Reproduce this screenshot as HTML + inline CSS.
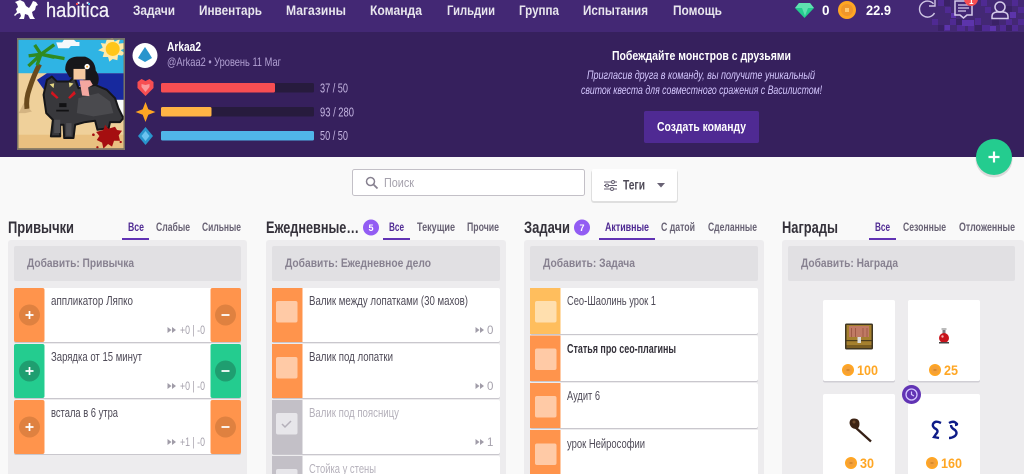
<!DOCTYPE html>
<html><head><meta charset="utf-8"><title>Habitica</title>
<style>
html,body{margin:0;padding:0;width:1024px;height:474px;overflow:hidden;background:#f9f9f9}
svg{display:block;position:absolute;left:0;top:0}
text{font-family:"Liberation Sans","Noto Sans CJK SC",sans-serif;white-space:pre}
.n{font-size:13.5px;font-weight:700;fill:#e8e6ee}
.t{font-size:12px;font-weight:700;fill:#686274}
.a{font-size:12px;font-weight:700;fill:#878190}
.h{font-size:16.5px;font-weight:700;fill:#34313a}
.x{font-size:13px;fill:#4e4a57}
.g{font-size:13px;fill:#b4b0ba}
.m{font-size:11.5px;fill:#a5a1ac}
.p{font-size:14px;font-weight:700;fill:#ffa623}
.v{font-size:12.5px;fill:#c3b4e0}
.b{fill:#e8e6ee;font-weight:700;font-size:12.5px}
</style></head><body>
<svg width="1024" height="474" viewBox="0 0 1024 474" xmlns="http://www.w3.org/2000/svg">
<defs>
<symbol id="coin" viewBox="0 0 12 12"><circle cx="6" cy="6" r="6" fill="#ffa623"/><circle cx="6" cy="6" r="4" fill="#f3a03a"/><rect x="4.500" y="5" width="3" height="2" fill="#d98a2a"/></symbol>
</defs>
<rect width="1024" height="474" fill="#f9f9f9"/>
<!-- top nav -->
<rect width="1024" height="32" fill="#432874"/>
<g fill="#3a2266">
<rect x="944" y="0" width="6" height="6"/><rect x="956" y="19" width="6" height="6"/><rect x="938" y="25" width="6" height="6"/><rect x="975" y="25" width="7" height="6"/><rect x="992" y="19" width="7" height="6"/><rect x="1006" y="6" width="6" height="6"/><rect x="1006" y="25" width="6" height="6"/>
</g>
<g fill="#4f2a93">
<rect x="938" y="0" width="6" height="6"/><rect x="945" y="7" width="6" height="6"/><rect x="932" y="19" width="6" height="6"/><rect x="944" y="25" width="6" height="6"/><rect x="950" y="19" width="6" height="6"/><rect x="957" y="25" width="8" height="6"/><rect x="975" y="18" width="6" height="7"/><rect x="968" y="25" width="6" height="6"/><rect x="982" y="25" width="8" height="6"/><rect x="985" y="7" width="6" height="6"/><rect x="981" y="0" width="6" height="6"/><rect x="1012" y="0" width="6" height="6"/><rect x="1018" y="7" width="6" height="6"/><rect x="1006" y="19" width="6" height="6"/><rect x="1000" y="25" width="6" height="6"/><rect x="1012" y="25" width="6" height="6"/><rect x="1018" y="19" width="6" height="6"/>
</g>
<g fill="#5c34ab"><rect x="951" y="13" width="5" height="5"/><rect x="962" y="20" width="12" height="6"/><rect x="945" y="25" width="5" height="5"/><rect x="990" y="26" width="6" height="5"/><rect x="1010" y="12" width="6" height="6"/></g>
<!-- logo -->
<path d="M20 0l4 2 2 4 3 2 2-3 2-4 3 1 2 3-2 1-1 4-3 2 1 4 2 3h-5l-2-4-3-1-1 5h-5l2-3-1-3-3 1-2 2-1-1 3-3-1-3 2-2-1-3-2-2z" fill="#fff"/>
<text x="46" y="17" fill="#f4f2f8" stroke="#f4f2f8" stroke-width=".25" textLength="63" lengthAdjust="spacingAndGlyphs" style="font-size:20px">habitica</text>
<rect x="76" y="3" width="2" height="2" fill="#f74e52"/><rect x="88" y="3" width="2" height="2" fill="#50b5e9"/>
<text class="n" x="133" y="15" textLength="42" lengthAdjust="spacingAndGlyphs">Задачи</text>
<text class="n" x="199" y="15" textLength="63" lengthAdjust="spacingAndGlyphs">Инвентарь</text>
<text class="n" x="286" y="15" textLength="60" lengthAdjust="spacingAndGlyphs">Магазины</text>
<text class="n" x="370" y="15" textLength="52" lengthAdjust="spacingAndGlyphs">Команда</text>
<text class="n" x="447" y="15" textLength="48" lengthAdjust="spacingAndGlyphs">Гильдии</text>
<text class="n" x="519" y="15" textLength="40" lengthAdjust="spacingAndGlyphs">Группа</text>
<text class="n" x="583" y="15" textLength="65" lengthAdjust="spacingAndGlyphs">Испытания</text>
<text class="n" x="673" y="15" textLength="49" lengthAdjust="spacingAndGlyphs">Помощь</text>
<!-- gem -->
<path d="M799 3h11l4 5-9.500 10-9.500-10z" fill="#24cc8f"/><path d="M799 3h11l4 5h-19zM802 8h6l-3 8z" fill="#5fe0b0"/>
<text class="n" x="822" y="15" style="fill:#fff">0</text>
<circle cx="847" cy="10" r="9" fill="#ffa623"/><circle cx="847" cy="10" r="6" fill="#f0962a"/><rect x="845" y="8" width="4" height="4" fill="#ffc870"/>
<text class="n" x="866" y="15" textLength="25" lengthAdjust="spacingAndGlyphs" style="fill:#fff">22.9</text>
<!-- refresh -->
<path d="M933.500 3.800A8 8 0 1 0 934.500 13" fill="none" stroke="#cfc6e4" stroke-width="1.400"/><path d="M935 0v6h-6" fill="none" stroke="#cfc6e4" stroke-width="1.400"/>
<!-- messages -->
<path d="M955 1h17v14h-5l-3.500 3-3.500-3h-5z" fill="#432874" stroke="#d5cbe9" stroke-width="1.500"/><path d="M958 5h11M958 8h11M958 11h8" stroke="#d5cbe9" stroke-width="1.200"/>
<circle cx="971" cy="-1" r="7" fill="#f74e52"/><text x="969" y="4" style="font-size:8px;font-weight:700" fill="#fff">1</text>
<!-- user -->
<circle cx="1000" cy="7" r="5" fill="none" stroke="#d5cbe9" stroke-width="1.500"/><path d="M992 18.500v-2q0-4 5-4.500h6q5 .5 5 4.500v2z" fill="none" stroke="#d5cbe9" stroke-width="1.500"/>
<!-- profile band -->
<rect y="32" width="1024" height="125" fill="#36205d"/>
<!-- avatar -->
<svg x="17" y="38" width="108" height="112" viewBox="20 10 325 335">
<rect x="20" y="10" width="325" height="335" fill="#efd09a"/>
<rect x="20" y="10" width="325" height="105" fill="#2fb4e4"/>
<rect x="20" y="300" width="325" height="45" fill="#e9c080"/>
<path d="M80 135l30-20h235v80h-25l-25-20-60-20h-90l-40 15z" fill="#17299e"/>
<path d="M300 195h45v55h-20z" fill="#fafafa"/>
<path d="M138 22h18l6-9h28l8 8h10v12h-26l-6 7h-32z" fill="#f4f8fb"/>
<path d="M308 8l6 12 16-8-4 14 18-2v16l-12 6 12 8-8 8-12-2-2 16-14-4-10 8-4-14-16 0 4-14-18-6 14-8-6-14 14 2 4-12z" fill="#ffeaa8"/>
<circle cx="308" cy="42" r="21" fill="#ffc61a"/>
<path d="M40 205l25 25-20 5h-20z" fill="#c9a878" opacity=".7"/>
<path d="M50 222q-4-30 8-62 12-38 30-72" fill="none" stroke="#6a4a1c" stroke-width="15"/>
<path d="M92 58L60 62M92 58L58 90M92 58L76 34M92 58l36-26M92 58l66 12M92 58l36 8M92 58l-10 28" stroke="#2f8a20" stroke-width="10" stroke-linecap="square" fill="none"/>
<!-- wolf -->
<path d="M110 135L125 125L140 140L178 140L192 125L205 160L255 150L290 165L315 190L325 220L340 250L330 262L300 262L296 280L262 285L255 258L225 262L195 270L190 310L162 310L160 270L150 270L150 305L122 305L128 255L108 235L100 180Z" fill="#38383c" stroke="#161618" stroke-width="6" stroke-linejoin="round"/>
<path d="M205 190l60-15 35 25 10 35-60 10-50-10z" fill="#4a4a4e"/>
<path d="M132 255h18v40h-18zM168 265h16v38h-16z" fill="#4d4d52"/>
<path d="M118 148l14-3-2 15zM190 146l-14-3 2 15z" fill="#e4d783"/>
<path d="M125 168l20 20-5 4-18-15zM192 168l-18 20 5 4 18-15z" fill="#d4141e"/>
<path d="M147 205h22v12h-22zM138 225h38v5h-38z" fill="#121214"/>
<!-- girl -->
<path d="M165 105q0-38 35-40h25q30 10 32 42 14 18 6 42l-30 8-15-25-40-5z" fill="#17171b"/>
<rect x="190" y="100" width="36" height="34" fill="#f5c9a0"/><rect x="190" y="90" width="34" height="12" fill="#17171b"/>
<circle cx="231" cy="95" r="8" fill="#fff"/><circle cx="231" cy="95" r="3" fill="#f0a030"/>
<path d="M208 136h32l8 14-14 8 4 26-22-2z" fill="#f4a7a0"/>
<!-- blood -->
<path d="M258 292l22-6 5-16 10 12 20-6 6 10 15 2-10 14 4 16-18 0-6 18-12-8-14 14-4-18-16-8 8-12z" fill="#a50e10"/>
<circle cx="250" cy="300" r="4" fill="#a50e10"/><circle cx="332" cy="322" r="3.500" fill="#a50e10"/><circle cx="262" cy="338" r="3.500" fill="#a50e10"/>
<rect x="22" y="12" width="321" height="331" fill="none" stroke="#7b7363" stroke-width="5"/>
</svg>
<!-- avatar circle -->
<circle cx="145" cy="55.500" r="12.500" fill="#fff"/>
<path d="M145 47l4 6 3 5-7 4-7-4 3-5z" fill="#2995cd"/>
<text class="b" x="167" y="51" textLength="34" lengthAdjust="spacingAndGlyphs" style="fill:#fff">Arkaa2</text>
<text x="167" y="66" style="font-size:12px" fill="#b2a1d3" textLength="114" lengthAdjust="spacingAndGlyphs">@Arkaa2 • Уровень 11 Маг</text>
<!-- stat icons -->
<path d="M145.500 96l-8-8v-6l4-3 4 2 4-2 4 3v6z" fill="#f74e52"/><path d="M145.500 92l-4-5v-3l4 1 4-1v3z" fill="#fa9a9c"/>
<path d="M145.500 102l2.800 7.200 7.200 2.800-7.200 2.800-2.800 7.200-2.800-7.200-7.200-2.800 7.200-2.800z" fill="#ffa623"/>
<path d="M145.500 127l7.500 9-7.500 9-7.500-9z" fill="#2995cd"/><path d="M145.500 131l4 5-4 5-4-5z" fill="#6bc4f0"/>
<!-- bars -->
<rect x="161" y="83" width="153" height="9.500" rx="1.500" fill="#271b3d"/><rect x="161" y="83" width="114" height="9.500" rx="1.500" fill="#f74e52"/>
<rect x="161" y="107" width="153" height="9.500" rx="1.500" fill="#271b3d"/><rect x="161" y="107" width="50.500" height="9.500" rx="1.500" fill="#ffb445"/>
<rect x="161" y="131" width="153" height="9.500" rx="1.500" fill="#50b5e9"/>
<text class="v" x="320" y="92.500" textLength="28" lengthAdjust="spacingAndGlyphs">37 / 50</text>
<text class="v" x="320" y="116.500" textLength="34" lengthAdjust="spacingAndGlyphs">93 / 280</text>
<text class="v" x="320" y="140" textLength="28" lengthAdjust="spacingAndGlyphs">50 / 50</text>
<!-- party -->
<text class="b" x="612" y="60" textLength="179" lengthAdjust="spacingAndGlyphs" style="fill:#fff;font-size:13px">Побеждайте монстров с друзьями</text>
<text x="587" y="79" style="font-size:11.500px;font-style:italic" fill="#d5c8ff" textLength="228" lengthAdjust="spacingAndGlyphs">Пригласив друга в команду, вы получите уникальный</text>
<text x="581" y="94" style="font-size:11.500px;font-style:italic" fill="#d5c8ff" textLength="241" lengthAdjust="spacingAndGlyphs">свиток квеста для совместного сражения с Василистом!</text>
<rect x="644" y="111" width="115" height="32" rx="2" fill="#4f2a93"/>
<text class="b" x="657" y="131" textLength="89" lengthAdjust="spacingAndGlyphs" style="fill:#fff;font-size:13px">Создать команду</text>
<!-- FAB -->
<circle cx="994" cy="159" r="18.500" fill="#000" opacity=".12"/>
<circle cx="994" cy="157" r="18" fill="#24cc8f"/><path d="M994 151.500v11M988.500 157h11" stroke="#fff" stroke-width="2.200"/>
<!-- search -->
<rect x="352.500" y="169.500" width="232" height="26" rx="2" fill="#fff" stroke="#c3c0c7"/>
<circle cx="370.500" cy="181.500" r="4" fill="none" stroke="#878190" stroke-width="1.500"/><path d="M373.500 184.500l4 4" stroke="#878190" stroke-width="1.800"/>
<text x="384" y="187" style="font-size:13px" fill="#a5a1ac" textLength="30" lengthAdjust="spacingAndGlyphs">Поиск</text>
<rect x="591" y="170" width="87" height="33" rx="3" fill="#000" opacity=".1"/>
<rect x="592" y="169" width="85" height="32" rx="2" fill="#fff"/>
<path d="M604 182h13M604 185.500h13M604 189h13" stroke="#686274" stroke-width="1.100"/><circle cx="613" cy="182" r="1.500" fill="#fff" stroke="#686274"/><circle cx="607" cy="185.500" r="1.500" fill="#fff" stroke="#686274"/><circle cx="612" cy="189" r="1.500" fill="#fff" stroke="#686274"/>
<text class="b" x="623" y="189.500" textLength="22" lengthAdjust="spacingAndGlyphs" style="fill:#4e4a57;font-size:13.500px">Теги</text>
<path d="M657 183h8l-4 4.500z" fill="#686274"/>
<!-- column boxes -->
<rect x="8" y="240" width="239" height="240" rx="3" fill="#edecee"/>
<rect x="266" y="240" width="240" height="240" rx="3" fill="#edecee"/>
<rect x="524" y="240" width="240" height="240" rx="3" fill="#edecee"/>
<rect x="782" y="240" width="242" height="240" rx="3" fill="#edecee"/>
<rect x="14" y="246" width="227" height="35" rx="2" fill="#e1e0e3"/>
<rect x="272" y="246" width="228" height="35" rx="2" fill="#e1e0e3"/>
<rect x="530" y="246" width="228" height="35" rx="2" fill="#e1e0e3"/>
<rect x="788" y="246" width="227" height="35" rx="2" fill="#e1e0e3"/>
<text class="a" x="27" y="267" textLength="107" lengthAdjust="spacingAndGlyphs">Добавить: Привычка</text>
<text class="a" x="285" y="267" textLength="146" lengthAdjust="spacingAndGlyphs">Добавить: Ежедневное дело</text>
<text class="a" x="543" y="267" textLength="92" lengthAdjust="spacingAndGlyphs">Добавить: Задача</text>
<text class="a" x="801" y="267" textLength="97" lengthAdjust="spacingAndGlyphs">Добавить: Награда</text>
<!-- headings -->
<text class="h" x="8" y="233" textLength="66" lengthAdjust="spacingAndGlyphs">Привычки</text>
<text class="h" x="266" y="233" textLength="93" lengthAdjust="spacingAndGlyphs">Ежедневные…</text>
<circle cx="371" cy="227.500" r="8" fill="#925cf3"/><text x="368.500" y="231" style="font-size:9px;font-weight:700" fill="#fff">5</text>
<text class="h" x="524" y="233" textLength="46" lengthAdjust="spacingAndGlyphs">Задачи</text>
<circle cx="582" cy="227.500" r="8" fill="#925cf3"/><text x="579.500" y="231" style="font-size:9px;font-weight:700" fill="#fff">7</text>
<text class="h" x="782" y="233" textLength="56" lengthAdjust="spacingAndGlyphs">Награды</text>
<!-- tabs -->
<text class="t" x="128" y="231" textLength="16" lengthAdjust="spacingAndGlyphs" style="fill:#4f2a93">Все</text>
<text class="t" x="156" y="231" textLength="34" lengthAdjust="spacingAndGlyphs">Слабые</text>
<text class="t" x="202" y="231" textLength="39" lengthAdjust="spacingAndGlyphs">Сильные</text>
<rect x="122" y="238" width="27" height="2" fill="#6133b4"/>
<text class="t" x="389" y="231" textLength="15" lengthAdjust="spacingAndGlyphs" style="fill:#4f2a93">Все</text>
<text class="t" x="417" y="231" textLength="38" lengthAdjust="spacingAndGlyphs">Текущие</text>
<text class="t" x="467" y="231" textLength="32" lengthAdjust="spacingAndGlyphs">Прочие</text>
<rect x="383" y="238" width="27" height="2" fill="#6133b4"/>
<text class="t" x="605" y="231" textLength="44" lengthAdjust="spacingAndGlyphs" style="fill:#4f2a93">Активные</text>
<text class="t" x="661" y="231" textLength="34" lengthAdjust="spacingAndGlyphs">С датой</text>
<text class="t" x="708" y="231" textLength="49" lengthAdjust="spacingAndGlyphs">Сделанные</text>
<rect x="599" y="238" width="56" height="2" fill="#6133b4"/>
<text class="t" x="875" y="231" textLength="15" lengthAdjust="spacingAndGlyphs" style="fill:#4f2a93">Все</text>
<text class="t" x="903" y="231" textLength="43" lengthAdjust="spacingAndGlyphs">Сезонные</text>
<text class="t" x="959" y="231" textLength="56" lengthAdjust="spacingAndGlyphs">Отложенные</text>
<rect x="869" y="238" width="27" height="2" fill="#6133b4"/>
<!-- habits -->
<g>
<rect x="14" y="289" width="227" height="54" rx="2" fill="#c9c7cd"/><rect x="14" y="288" width="227" height="54" rx="2" fill="#fff"/>
<rect x="14" y="288" width="30.500" height="54" rx="2" fill="#ff944c"/><rect x="210.500" y="288" width="30.500" height="54" rx="2" fill="#ff944c"/>
<circle cx="29.500" cy="315" r="10.500" fill="#df8140"/><circle cx="225.500" cy="315" r="10.500" fill="#df8140"/>
<rect x="14" y="345" width="227" height="54" rx="2" fill="#c9c7cd"/><rect x="14" y="344" width="227" height="54" rx="2" fill="#fff"/>
<rect x="14" y="344" width="30.500" height="54" rx="2" fill="#24cc8f"/><rect x="210.500" y="344" width="30.500" height="54" rx="2" fill="#24cc8f"/>
<circle cx="29.500" cy="371" r="10.500" fill="#1f9e70"/><circle cx="225.500" cy="371" r="10.500" fill="#1f9e70"/>
<rect x="14" y="401" width="227" height="54" rx="2" fill="#c9c7cd"/><rect x="14" y="400" width="227" height="54" rx="2" fill="#fff"/>
<rect x="14" y="400" width="30.500" height="54" rx="2" fill="#ff944c"/><rect x="210.500" y="400" width="30.500" height="54" rx="2" fill="#ff944c"/>
<circle cx="29.500" cy="427" r="10.500" fill="#df8140"/><circle cx="225.500" cy="427" r="10.500" fill="#df8140"/>
<path d="M29.500 311v8M25.500 315h8M29.500 367v8M25.500 371h8M29.500 423v8M25.500 427h8M221.500 315h8M221.500 371h8M221.500 427h8" stroke="#fff" stroke-width="1.700"/>
</g>
<text class="x" x="51" y="305" textLength="82" lengthAdjust="spacingAndGlyphs">аппликатор Ляпко</text>
<text class="x" x="51" y="361" textLength="91" lengthAdjust="spacingAndGlyphs">Зарядка от 15 минут</text>
<text class="x" x="51" y="417" textLength="67" lengthAdjust="spacingAndGlyphs">встала в 6 утра</text>
<text class="m" x="180" y="334" textLength="25" lengthAdjust="spacingAndGlyphs">+0 | -0</text>
<text class="m" x="180" y="390" textLength="25" lengthAdjust="spacingAndGlyphs">+0 | -0</text>
<text class="m" x="180" y="446" textLength="25" lengthAdjust="spacingAndGlyphs">+1 | -0</text>
<!-- dailies -->
<g>
<rect x="272" y="289" width="228" height="54" rx="2" fill="#c9c7cd"/><rect x="272" y="288" width="228" height="54" rx="2" fill="#fff"/><rect x="272" y="288" width="30.500" height="54" fill="#ff944c"/>
<rect x="272" y="345" width="228" height="54" rx="2" fill="#c9c7cd"/><rect x="272" y="344" width="228" height="54" rx="2" fill="#fff"/><rect x="272" y="344" width="30.500" height="54" fill="#ff944c"/>
<rect x="272" y="401" width="228" height="54" rx="2" fill="#c9c7cd"/><rect x="272" y="400" width="228" height="54" rx="2" fill="#fff"/><rect x="272" y="400" width="30.500" height="54" fill="#c3c0c7"/>
<rect x="272" y="456" width="228" height="30" rx="2" fill="#fff"/><rect x="272" y="456" width="30.500" height="30" fill="#c3c0c7"/>
<rect x="276" y="301" width="21.500" height="21.500" rx="2" fill="#fff" opacity=".5"/>
<rect x="276" y="357" width="21.500" height="21.500" rx="2" fill="#fff" opacity=".5"/>
<rect x="276" y="413" width="21.500" height="21.500" rx="2" fill="#e7e6ea"/>
<rect x="276" y="469" width="21.500" height="21.500" rx="2" fill="#e7e6ea"/>
<path d="M282 424l3 3 6-6" fill="none" stroke="#b4b0ba" stroke-width="1.500"/>
</g>
<g fill="#a09ca8">
<path d="M167.500 327l4 3-4 3zM172 327l4 3-4 3zM167.500 383l4 3-4 3zM172 383l4 3-4 3zM167.500 439l4 3-4 3zM172 439l4 3-4 3z"/>
<path d="M475.500 327l4 3-4 3zM480 327l4 3-4 3zM475.500 383l4 3-4 3zM480 383l4 3-4 3zM475.500 439l4 3-4 3zM480 439l4 3-4 3z"/>
</g>
<text class="x" x="309" y="305" textLength="159" lengthAdjust="spacingAndGlyphs">Валик между лопатками (30 махов)</text>
<text class="x" x="309" y="361" textLength="84" lengthAdjust="spacingAndGlyphs">Валик под лопатки</text>
<text class="g" x="309" y="417" textLength="90" lengthAdjust="spacingAndGlyphs">Валик под поясницу</text>
<text class="g" x="309" y="473" textLength="67" lengthAdjust="spacingAndGlyphs">Стойка у стены</text>
<text class="m" x="487" y="334">0</text><text class="m" x="487" y="390">0</text><text class="m" x="487" y="446">1</text>
<!-- todos -->
<g>
<rect x="530" y="289" width="228" height="46" rx="2" fill="#c9c7cd"/><rect x="530" y="288" width="228" height="46" rx="2" fill="#fff"/><rect x="530" y="288" width="30.500" height="46" fill="#ffbe5d"/>
<rect x="530" y="336" width="228" height="46" rx="2" fill="#c9c7cd"/><rect x="530" y="335.500" width="228" height="45.500" rx="2" fill="#fff"/><rect x="530" y="335.500" width="30.500" height="45.500" fill="#ff944c"/>
<rect x="530" y="383" width="228" height="46" rx="2" fill="#c9c7cd"/><rect x="530" y="383" width="228" height="45" rx="2" fill="#fff"/><rect x="530" y="383" width="30.500" height="45" fill="#ff944c"/>
<rect x="530" y="430" width="228" height="50" fill="#fff"/><rect x="530" y="430" width="30.500" height="50" fill="#ff944c"/>
<rect x="535" y="301" width="21.500" height="21.500" rx="2" fill="#fff" opacity=".5"/>
<rect x="535" y="348.500" width="21.500" height="21.500" rx="2" fill="#fff" opacity=".5"/>
<rect x="535" y="396" width="21.500" height="21.500" rx="2" fill="#fff" opacity=".5"/>
<rect x="535" y="443.500" width="21.500" height="21.500" rx="2" fill="#fff" opacity=".5"/>
</g>
<text class="x" x="567" y="305" textLength="89" lengthAdjust="spacingAndGlyphs">Сео-Шаолинь урок 1</text>
<text class="x" x="567" y="353" textLength="109" lengthAdjust="spacingAndGlyphs" style="font-weight:700;fill:#34313a">Статья про сео-плагины</text>
<text class="x" x="567" y="400" textLength="33" lengthAdjust="spacingAndGlyphs">Аудит 6</text>
<text class="x" x="567" y="448" textLength="78" lengthAdjust="spacingAndGlyphs">урок Нейрософии</text>
<!-- rewards -->
<rect x="823" y="301.500" width="72" height="81" rx="2" fill="#d0ced4"/><rect x="823" y="300" width="72" height="81" rx="2" fill="#fff"/>
<rect x="908" y="301.500" width="72" height="81" rx="2" fill="#d0ced4"/><rect x="908" y="300" width="72" height="81" rx="2" fill="#fff"/>
<rect x="823" y="394" width="72" height="90" rx="2" fill="#fff"/>
<rect x="908" y="394" width="72" height="90" rx="2" fill="#fff"/>
<!-- chest -->
<rect x="845" y="323.500" width="28" height="26" rx="1.500" fill="#3f3522"/>
<rect x="846.500" y="325" width="25" height="23" fill="#a5802e"/>
<rect x="849" y="326" width="20" height="11" fill="#c07a64"/>
<path d="M851.500 328v9M855.500 328v9M863 328v9M867 328v9" stroke="#a05a46"/>
<rect x="846.500" y="340" width="25" height="1.200" fill="#4e3e1c"/>
<rect x="846.500" y="345" width="25" height="3" fill="#7a5d22"/>
<rect x="857.500" y="337" width="3.500" height="6" fill="#ddd"/>
<!-- potion -->
<rect x="941.500" y="328" width="5" height="2" fill="#bbb"/><rect x="942.500" y="330" width="3" height="4" fill="#7d7a80"/>
<circle cx="944" cy="338" r="5" fill="#c8141c"/><circle cx="942.500" cy="336.500" r="1.200" fill="#f7b0b0"/>
<path d="M939 342h10v1.500h-10z" fill="#444"/>
<!-- staff -->
<path d="M855 427l16 14.500" stroke="#352015" stroke-width="2.300"/>
<path d="M849.500 423q0-4.500 4.500-4.500 5.500 0 5.500 5.500 0 4-3 5-6 0-7-6z" fill="#3d2414"/><circle cx="854" cy="422" r="1.500" fill="#6e4a2c"/>
<!-- S shapes -->
<path d="M941 423q-6-3-8 1-1 3 3 5 3 2 0 5-2 3-2 3l5 1M949 423q5-3 8 1 0 1-2 1M951 425q0 3 4 5 3 3 0 6-3 2-6 2" fill="none" stroke="#0e1c88" stroke-width="2.400"/>
<!-- clock -->
<circle cx="911.500" cy="394.500" r="9.500" fill="#6133b4"/><circle cx="911.500" cy="394.500" r="5.500" fill="none" stroke="#d5c8ff" stroke-width="1.300"/><path d="M911.500 391.500v3l2.500 1.500" fill="none" stroke="#d5c8ff" stroke-width="1.200"/>
<!-- prices -->
<use href="#coin" x="842" y="364" width="12" height="12"/><text class="p" x="857" y="375" textLength="21" lengthAdjust="spacingAndGlyphs">100</text>
<use href="#coin" x="929" y="364" width="12" height="12"/><text class="p" x="944" y="375" textLength="14" lengthAdjust="spacingAndGlyphs">25</text>
<use href="#coin" x="845" y="457" width="12" height="12"/><text class="p" x="860" y="468" textLength="14" lengthAdjust="spacingAndGlyphs">30</text>
<use href="#coin" x="926" y="457" width="12" height="12"/><text class="p" x="941" y="468" textLength="21" lengthAdjust="spacingAndGlyphs">160</text>
</svg>
</body></html>
